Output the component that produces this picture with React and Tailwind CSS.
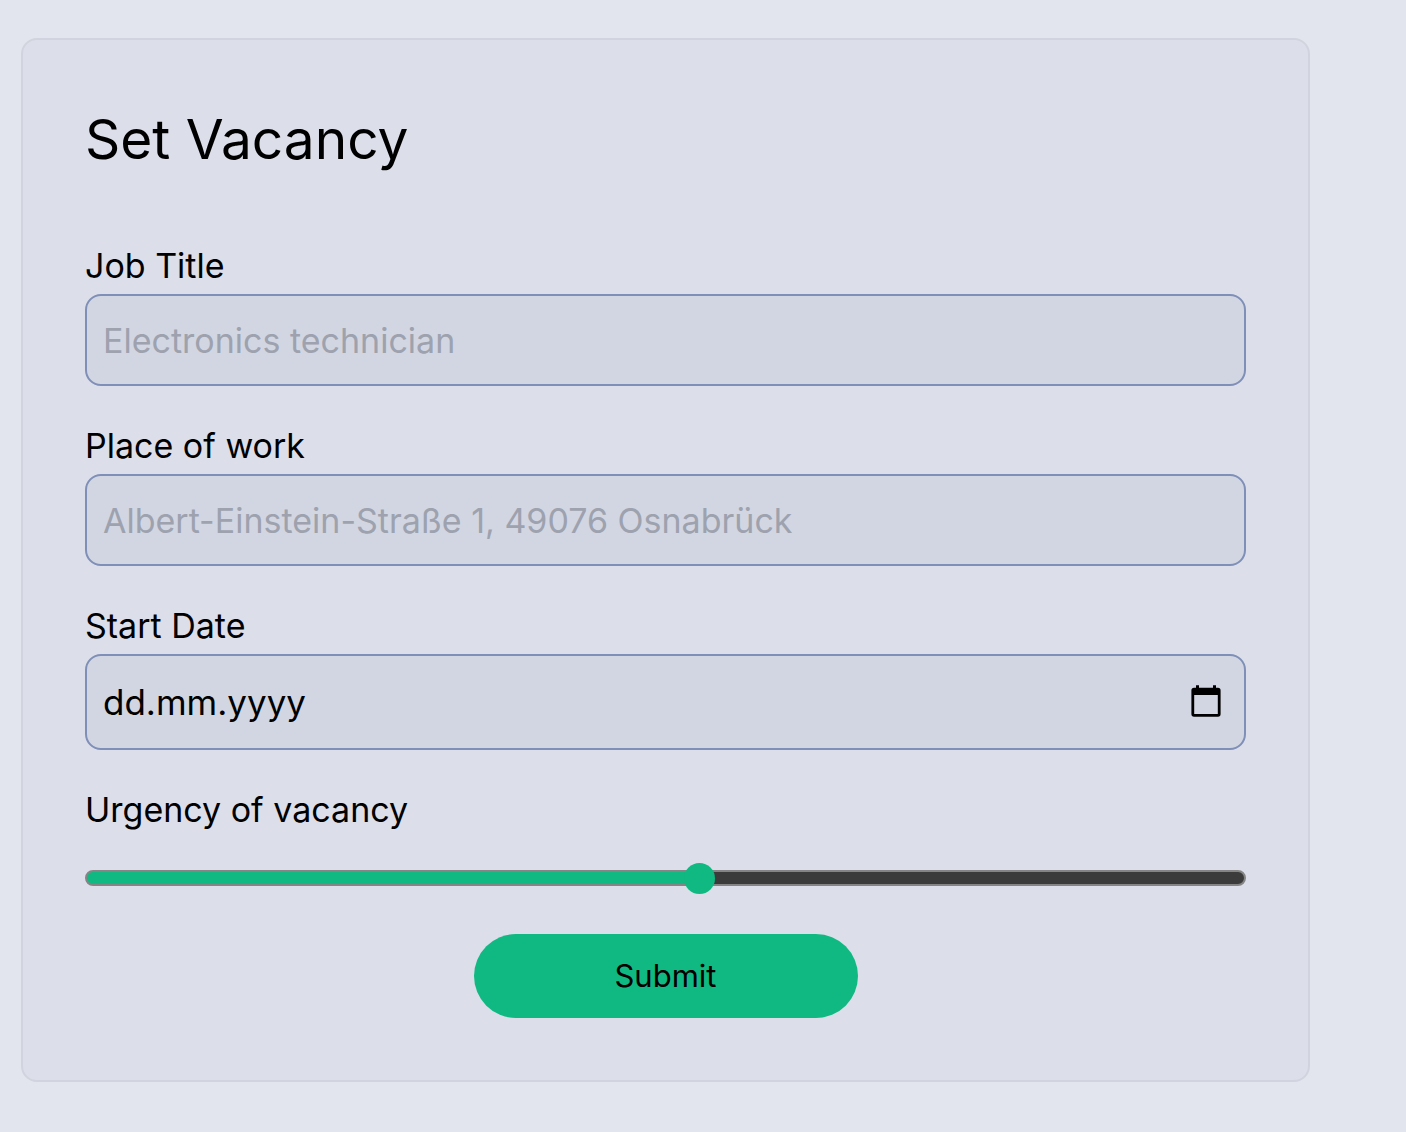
import { useState } from "react";

const fieldClass =
  "block w-full rounded-2xl border-2 border-[#7f8fb8] bg-[#d2d6e2] px-4 text-black outline-none";

function Field({ id, label, children }) {
  return (
    <div className="mb-[34px]">
      <label htmlFor={id} className="block pb-0.5 leading-[52px]">
        {label}
      </label>
      {children}
    </div>
  );
}

function CalendarIcon() {
  return (
    <svg viewBox="0 0 36 36" className="size-9" fill="currentColor" aria-hidden="true">
      <path
        fillRule="evenodd"
        d="M8 1.3h3v2.5h14V1.3h3v2.5h2a2.6 2.6 0 0 1 2.6 2.6v23.7a2.6 2.6 0 0 1-2.6 2.6H6a2.6 2.6 0 0 1-2.6-2.6V6.4A2.6 2.6 0 0 1 6 3.8h2zM6.2 11v18.9h23.6V11z"
      />
    </svg>
  );
}

export default function App() {
  const [urgency, setUrgency] = useState(53);
  return (
    <main className="min-h-screen bg-[#e2e5ed] pt-[38px] pr-24 pb-[50px] pl-[21px] font-['Inter',sans-serif] text-[34px] text-black">
      <form
        className="rounded-2xl border-2 border-[#d1d4de] bg-[#dcdee9] p-[62px]"
        onSubmit={(e) => e.preventDefault()}
      >
        <h1 className="mb-16 text-[55px] leading-[74px]">Set Vacancy</h1>
        <Field id="job" label="Job Title">
          <input
            id="job"
            type="text"
            placeholder="Electronics technician"
            className={`${fieldClass} h-[92px] placeholder:text-[#9da2ae]`}
          />
        </Field>
        <Field id="place" label="Place of work">
          <input
            id="place"
            type="text"
            placeholder="Albert-Einstein-Straße 1, 49076 Osnabrück"
            className={`${fieldClass} h-[92px] placeholder:text-[#9da2ae]`}
          />
        </Field>
        <Field id="date" label="Start Date">
          <div className={`${fieldClass} flex h-24 items-center`}>
            <input
              id="date"
              type="text"
              placeholder="dd.mm.yyyy"
              className="min-w-0 flex-1 bg-transparent text-[35px] outline-none placeholder:text-black"
            />
            <button type="button" aria-label="Open calendar" className="mr-1">
              <CalendarIcon />
            </button>
          </div>
        </Field>
        <label htmlFor="urgency" className="block pb-0.5 leading-[52px]">
          Urgency of vacancy
        </label>
        <input
          id="urgency"
          type="range"
          min="0"
          max="100"
          value={urgency}
          onChange={(e) => setUrgency(Number(e.target.value))}
          style={{
            backgroundImage: `linear-gradient(to right, #10b981 ${urgency}%, #3b3b3b ${urgency}%)`,
          }}
          className="mt-8 block h-4 w-full appearance-none rounded-full border-2 border-[#858585] bg-[#3b3b3b] bg-origin-border outline-none [&::-webkit-slider-thumb]:size-[31px] [&::-webkit-slider-thumb]:appearance-none [&::-webkit-slider-thumb]:rounded-full [&::-webkit-slider-thumb]:bg-[#10b981]"
        />
        <button
          type="submit"
          className="mx-auto mt-12 block h-[84px] w-96 rounded-full bg-[#10b981] text-[31px]"
        >
          Submit
        </button>
      </form>
    </main>
  );
}
